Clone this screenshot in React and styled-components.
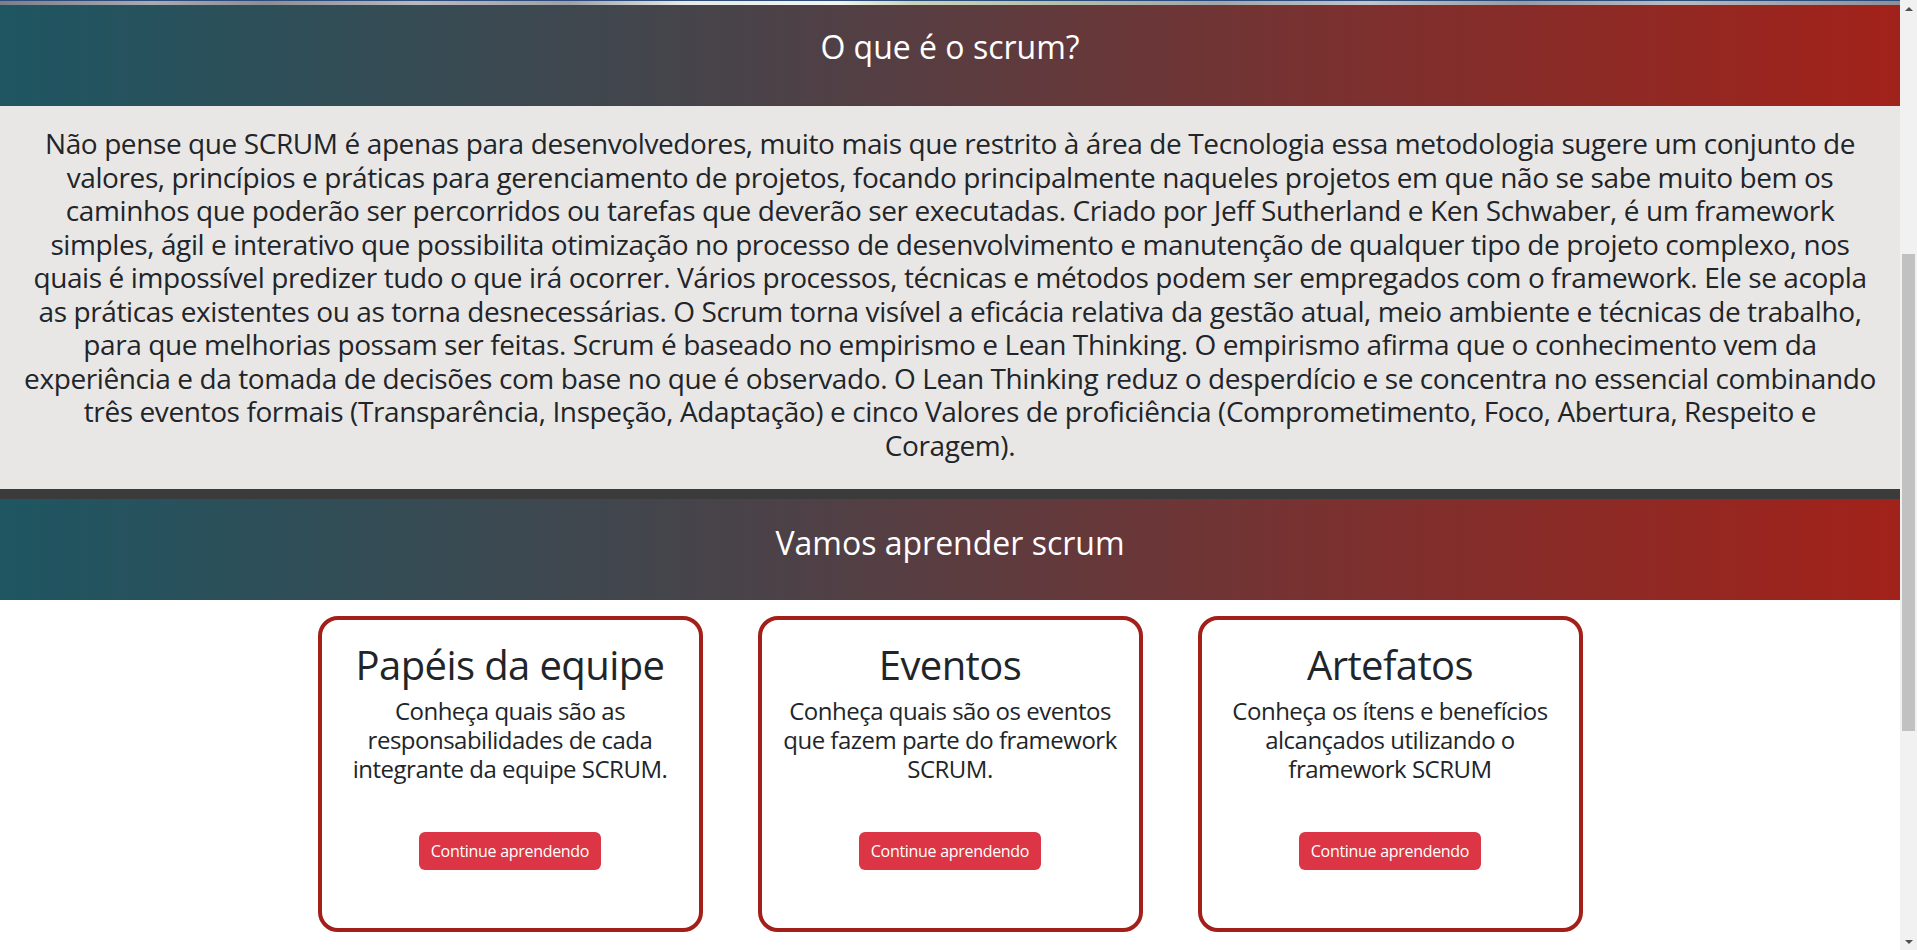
import styled, {createGlobalStyle} from 'styled-components'

const GlobalStyle = createGlobalStyle`
  html, body {
    margin: 0;
    padding: 0;
    height: 100%;
    overflow: hidden;
  }
  body {
    font-family: 'Open Sans', 'Noto Sans', sans-serif;
    color: #212529;
    background: #fff;
  }
  * {
    box-sizing: border-box;
  }
`

const Viewport = styled.div`
  display: flex;
  height: 100vh;
  overflow: hidden;
`

const Page = styled.main`
  flex: 1;
  display: flex;
  flex-direction: column;
  min-width: 0;
`

const PhotoEdge = styled.div`
  height: 5px;
  flex-shrink: 0;
  background:
    linear-gradient(#2d4d7f 0 1px, transparent 1px),
    linear-gradient(
      90deg,
      #7d7f86 0%,
      #a9abb0 8%,
      #8c8e94 14%,
      #b7b9bd 22%,
      #9fa1a5 30%,
      #e8e8e4 36%,
      #f4f4ef 44%,
      #c9d3b8 48%,
      #b5bfa8 56%,
      #a2a6a8 64%,
      #c2c4c7 72%,
      #9a9ca1 80%,
      #b8babd 88%,
      #8e9096 100%
    );
`

const Banner = styled.header`
  flex-shrink: 0;
  height: ${({$tall}) => $tall}px;
  padding-top: ${({$rule}) => ($rule ? 25 : 23)}px;
  text-align: center;
  color: #fff;
  background: linear-gradient(90deg, #1e5662 0%, #4a4248 40%, #7a3130 70%, #a2221a 100%);
  border-top: ${({$rule}) => ($rule ? '10px solid #3b3b3b' : 'none')};
`

const BannerTitle = styled.h2`
  margin: 0;
  font-size: 32px;
  line-height: 38px;
  font-weight: 400;
`

const About = styled.section`
  flex-shrink: 0;
  background: #e9e7e5;
  padding: 21px 10px 27px;
`

const AboutText = styled.h3`
  margin: 0;
  font-size: 28px;
  line-height: 33.5px;
  font-weight: 500;
  text-align: center;
  letter-spacing: -0.4px;
`

const Line = styled.span`
  display: block;
  white-space: nowrap;
`

const Cards = styled.section`
  display: grid;
  grid-template-columns: repeat(3, 440px);
  justify-content: center;
  justify-items: center;
  padding-top: 16px;
`

const Card = styled.article`
  width: 385px;
  height: 316px;
  border: 4px solid #a31f1a;
  border-radius: 20px;
  padding: 21px 8px 0;
  display: flex;
  flex-direction: column;
  align-items: center;
  text-align: center;
`

const CardTitle = styled.h1`
  margin: 0 0 8px;
  font-size: 40px;
  line-height: 48px;
  font-weight: 500;
  letter-spacing: -0.6px;
`

const CardText = styled.h4`
  margin: 0;
  font-size: 24px;
  line-height: 28.8px;
  font-weight: 500;
  letter-spacing: -0.5px;
`

const Button = styled.button`
  margin-top: 49px;
  height: 38px;
  padding: 0 12px;
  border: none;
  border-radius: 6px;
  background: #dc3545;
  color: #fff;
  font-family: inherit;
  font-size: 16px;
  letter-spacing: -0.3px;
  cursor: pointer;
`

const Scrollbar = styled.aside`
  width: 17px;
  flex-shrink: 0;
  background: #f1f1f1;
  display: flex;
  flex-direction: column;
  align-items: center;
`

const Arrow = styled.div`
  height: 17px;
  width: 17px;
  display: flex;
  align-items: center;
  justify-content: center;
  margin-top: ${({$down}) => ($down ? 'auto' : '0')};

  &::before {
    content: '';
    border-left: 4px solid transparent;
    border-right: 4px solid transparent;
    ${({$down}) =>
      $down ? 'border-top: 4px solid #505050;' : 'border-bottom: 4px solid #505050;'}
  }
`

const Thumb = styled.div`
  width: 13px;
  height: 477px;
  margin-top: 237px;
  background: #c1c1c1;
`

const aboutLines = [
  'Não pense que SCRUM é apenas para desenvolvedores, muito mais que restrito à área de Tecnologia essa metodologia sugere um conjunto de',
  'valores, princípios e práticas para gerenciamento de projetos, focando principalmente naqueles projetos em que não se sabe muito bem os',
  'caminhos que poderão ser percorridos ou tarefas que deverão ser executadas. Criado por Jeff Sutherland e Ken Schwaber, é um framework',
  'simples, ágil e interativo que possibilita otimização no processo de desenvolvimento e manutenção de qualquer tipo de projeto complexo, nos',
  'quais é impossível predizer tudo o que irá ocorrer. Vários processos, técnicas e métodos podem ser empregados com o framework. Ele se acopla',
  'as práticas existentes ou as torna desnecessárias. O Scrum torna visível a eficácia relativa da gestão atual, meio ambiente e técnicas de trabalho,',
  'para que melhorias possam ser feitas. Scrum é baseado no empirismo e Lean Thinking. O empirismo afirma que o conhecimento vem da',
  'experiência e da tomada de decisões com base no que é observado. O Lean Thinking reduz o desperdício e se concentra no essencial combinando',
  'três eventos formais (Transparência, Inspeção, Adaptação) e cinco Valores de proficiência (Comprometimento, Foco, Abertura, Respeito e',
  'Coragem).',
]

const topics = [
  {
    title: 'Papéis da equipe',
    lines: ['Conheça quais são as', 'responsabilidades de cada', 'integrante da equipe SCRUM.'],
  },
  {
    title: 'Eventos',
    lines: ['Conheça quais são os eventos', 'que fazem parte do framework', 'SCRUM.'],
  },
  {
    title: 'Artefatos',
    lines: ['Conheça os ítens e benefícios', 'alcançados utilizando o', 'framework SCRUM'],
  },
]

const App = () => {
  return (
    <>
      <GlobalStyle />
      <Viewport>
        <Page>
          <PhotoEdge />
          <Banner $tall={101}>
            <BannerTitle>O que é o scrum?</BannerTitle>
          </Banner>

          <About>
            <AboutText>
              {aboutLines.map(line => (
                <Line key={line}>{line}</Line>
              ))}
            </AboutText>
          </About>

          <Banner $tall={111} $rule>
            <BannerTitle>Vamos aprender scrum</BannerTitle>
          </Banner>

          <Cards>
            {topics.map(topic => (
              <Card key={topic.title}>
                <CardTitle>{topic.title}</CardTitle>
                <CardText>
                  {topic.lines.map(line => (
                    <Line key={line}>{line}</Line>
                  ))}
                </CardText>
                <Button type="button">Continue aprendendo</Button>
              </Card>
            ))}
          </Cards>
        </Page>

        <Scrollbar>
          <Arrow />
          <Thumb />
          <Arrow $down />
        </Scrollbar>
      </Viewport>
    </>
  )
}

export default App
